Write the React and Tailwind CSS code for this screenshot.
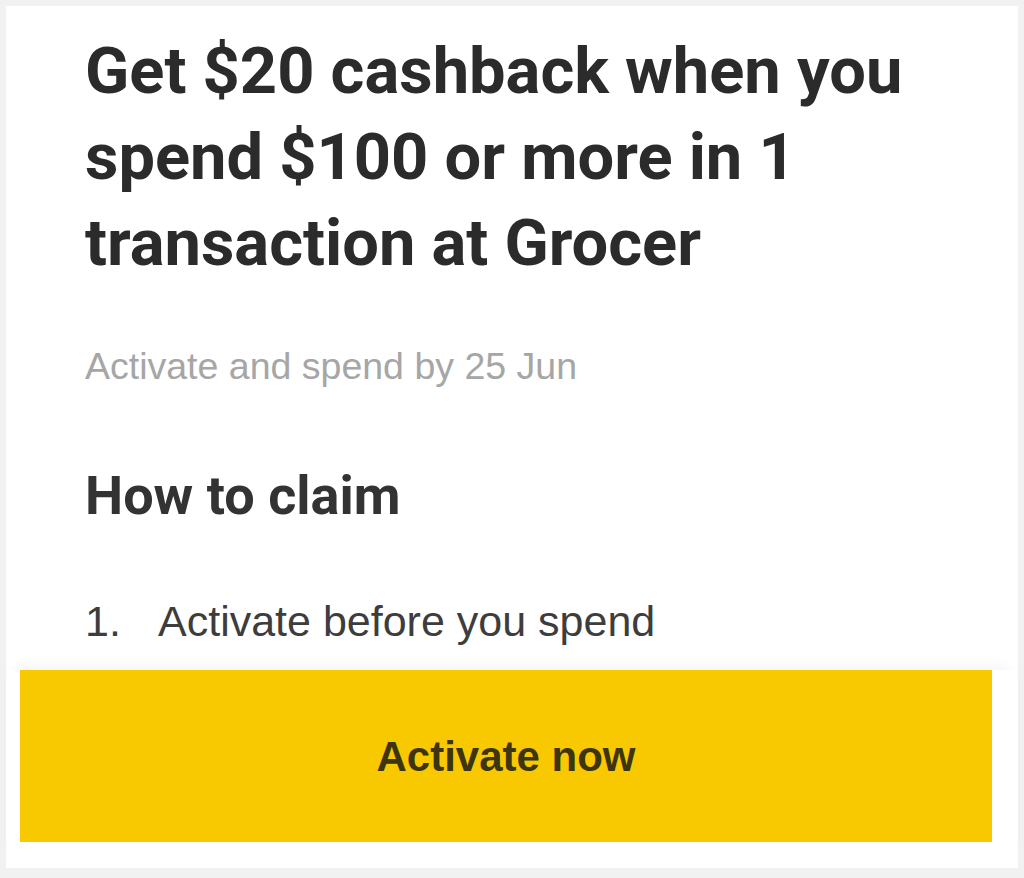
export default function App() {
  return (
    <div className="h-[878px] w-[1024px] bg-[#f1f1f1] px-[6px] pb-[10px] pt-[6px] font-['Roboto',sans-serif]">
      <div className="flex h-full flex-col bg-white">
        {/* offer details */}
        <div className="flex-1 overflow-hidden pl-[79px] pr-[60px] pt-[22px]">
          <h1 className="text-[65px] font-bold leading-[86px] text-[#2b2b2b]">
            Get $20 cashback when you spend $100 or more in 1 transaction at Grocer
          </h1>
          <p className="mt-[52px] font-['Liberation_Sans',sans-serif] text-[37.5px] text-[#a6a6a6]">
            Activate and spend by 25 Jun
          </p>
          <h2 className="mt-[61px] text-[54px] font-bold text-[#333]">How to claim</h2>
          <ol className="mt-[53px] font-['Liberation_Sans',sans-serif] text-[43px] text-[#3d3d3d]">
            <li className="flex">
              <span className="w-[73px]">1.</span>
              <span>Activate before you spend</span>
            </li>
          </ol>
        </div>

        {/* sticky action */}
        <div className="pb-[26px] pl-[14px] pr-[26px] shadow-[0_-12px_16px_-10px_rgba(0,0,0,0.06)]">
          <button className="flex h-[172px] w-full items-center justify-center bg-[#f8c800] font-['Liberation_Sans',sans-serif] text-[42px] font-bold text-[#3d3510]">
            Activate now
          </button>
        </div>
      </div>
    </div>
  );
}
